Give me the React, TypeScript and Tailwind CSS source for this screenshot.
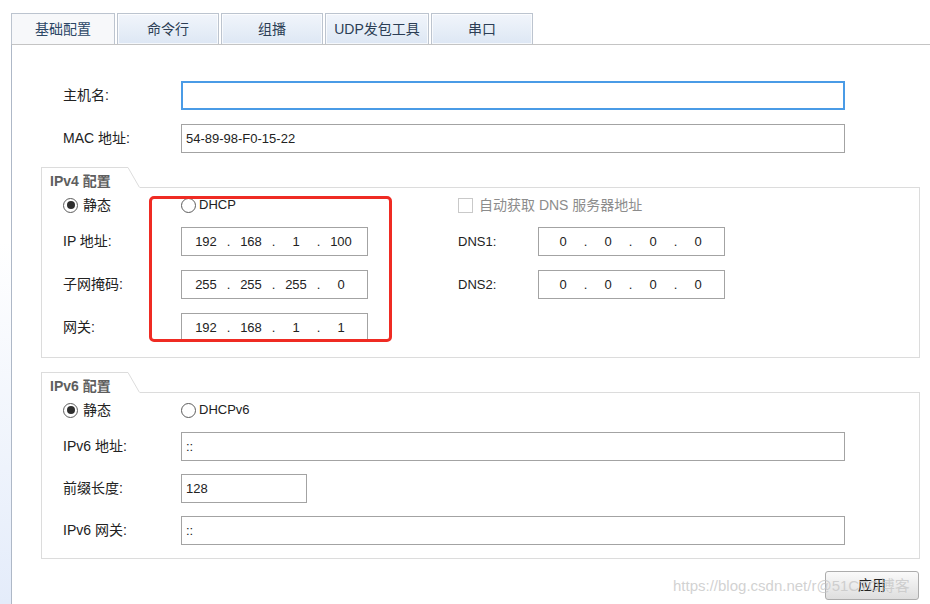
import type { ReactNode } from 'react'

const tabs = ['基础配置', '命令行', '组播', 'UDP发包工具', '串口']
const tabWidths = ['w-[104px]', 'w-[102px]', 'w-[102px]', 'w-[104px]', 'w-[102px]']

function Radio({ checked, label }: { checked?: boolean; label: string }) {
  return (
    <div className="flex h-[18px] items-center">
      <span className="flex h-[15px] w-[15px] items-center justify-center rounded-full border border-[#5c5c5c] bg-white">
        {checked ? <span className="h-[8px] w-[8px] rounded-full bg-[#2e2e2e]" /> : null}
      </span>
      <span className={checked ? 'ml-[5px] text-[14px] text-[#222]' : 'ml-[3px] text-[13px] text-[#222]'}>{label}</span>
    </div>
  )
}

function IpBox({ parts }: { parts: string[] }) {
  return (
    <div className="flex h-[29px] w-[187px] items-center border border-[#a3a3a3] bg-white pl-[9px] text-[13px] text-[#222]">
      {parts.map((part, index) => (
        <div className="flex" key={index}>
          <span className="w-[30px] text-center">{part}</span>
          {index < 3 ? <span className="w-[15px] text-center">.</span> : null}
        </div>
      ))}
    </div>
  )
}

function Field({ label, children }: { label: string; children: ReactNode }) {
  return (
    <div className="flex items-center">
      <div className="w-[118px] text-[14px] text-[#222]">{label}</div>
      {children}
    </div>
  )
}

function TextBox({ value, width = 'w-[664px]', focus }: { value?: string; width?: string; focus?: boolean }) {
  return (
    <div
      className={`flex h-[29px] items-center bg-white pl-[4px] text-[13px] text-[#222] ${width} ${
        focus ? 'border-2 border-[#4a9be6]' : 'border border-[#a3a3a3]'
      }`}
    >
      {value}
    </div>
  )
}

function GroupTitle({ title }: { title: string }) {
  return (
    <div className="flex h-[21px]">
      <div className="flex w-[87px] items-end border-l border-t border-[#dcdcdc] pl-[8px] text-[14px] leading-[14px] font-bold text-[#5e5e5e]">
        {title}
      </div>
      <svg className="h-[21px] w-[12px] shrink-0" viewBox="0 0 12 21">
        <line stroke="#dcdcdc" strokeWidth="1" x1="0" x2="11.5" y1="0.5" y2="20.5" />
      </svg>
      <div className="flex-1 border-b border-[#dcdcdc]" />
    </div>
  )
}

export default function App() {
  return (
    <div
      className="relative h-[604px] w-[930px] overflow-hidden bg-white"
      style={{ fontFamily: '"Liberation Sans", "Noto Sans CJK SC", sans-serif' }}
    >
      <div className="flex h-full">
        <div className="w-[11px] shrink-0 bg-gradient-to-b from-white from-40% to-[#e4ecfa]" />
        <div className="flex flex-1 flex-col">
          <div className="flex gap-[2px] pt-[13px]">
            {tabs.map((tab, index) => (
              <div
                className={`flex h-[31px] items-center justify-center border border-b-0 border-[#bcc4cf] text-[14px] ${tabWidths[index]} ${
                  index === 0
                    ? 'bg-[#f7f8fa] text-[#2c4766]'
                    : 'bg-gradient-to-b from-[#f1f5fb] to-[#dde7f4] text-[#2c3e55] shadow-[inset_0_0_0_1px_rgba(255,255,255,0.7)]'
                }`}
                key={tab}
              >
                {tab}
              </div>
            ))}
          </div>

          <div className="flex-1 border-l border-t border-l-[#aeb8c7] border-t-[#c4c4c4] pl-[29px] pr-[10px] pt-[36px]">
            <div className="flex flex-col gap-[14px] pl-[22px]">
              <Field label="主机名:">
                <TextBox focus />
              </Field>
              <Field label="MAC 地址:">
                <TextBox value="54-89-98-F0-15-22" />
              </Field>
            </div>

            <div className="mt-[14px]">
              <GroupTitle title="IPv4 配置" />
              <div className="flex border-x border-b border-[#dcdcdc] pb-[15px] pl-[21px] pt-[8px]">
                <div className="flex w-[395px] flex-col gap-[14px]">
                  <div className="-mb-[1px] flex">
                    <div className="w-[118px]">
                      <Radio checked label="静态" />
                    </div>
                    <Radio label="DHCP" />
                  </div>
                  <Field label="IP 地址:">
                    <IpBox parts={['192', '168', '1', '100']} />
                  </Field>
                  <Field label="子网掩码:">
                    <IpBox parts={['255', '255', '255', '0']} />
                  </Field>
                  <Field label="网关:">
                    <IpBox parts={['192', '168', '1', '1']} />
                  </Field>
                </div>
                <div className="flex flex-col gap-[14px]">
                  <div className="-mb-[1px] flex h-[18px] items-center">
                    <span className="h-[15px] w-[15px] border border-[#c9c9c9] bg-white" />
                    <span className="ml-[6px] text-[14px] text-[#8c8c8c]">自动获取 DNS 服务器地址</span>
                  </div>
                  <div className="flex items-center">
                    <div className="w-[80px] text-[13px] text-[#222]">DNS1:</div>
                    <IpBox parts={['0', '0', '0', '0']} />
                  </div>
                  <div className="flex items-center">
                    <div className="w-[80px] text-[13px] text-[#222]">DNS2:</div>
                    <IpBox parts={['0', '0', '0', '0']} />
                  </div>
                </div>
              </div>
            </div>

            <div className="mt-[14px]">
              <GroupTitle title="IPv6 配置" />
              <div className="flex flex-col gap-[13px] border-x border-b border-[#dcdcdc] pb-[13px] pl-[21px] pt-[8px]">
                <div className="flex">
                  <div className="w-[118px]">
                    <Radio checked label="静态" />
                  </div>
                  <Radio label="DHCPv6" />
                </div>
                <Field label="IPv6 地址:">
                  <TextBox value="::" />
                </Field>
                <Field label="前缀长度:">
                  <TextBox value="128" width="w-[126px]" />
                </Field>
                <Field label="IPv6 网关:">
                  <TextBox value="::" />
                </Field>
              </div>
            </div>

            <div className="mt-[12px] flex justify-end pr-[1px]">
              <div className="flex h-[29px] w-[94px] items-center justify-center rounded-[3px] border border-[#acacac] bg-gradient-to-b from-[#fafafa] to-[#dedede] text-[14px] text-[#222]">
                应用
              </div>
            </div>
          </div>
        </div>
      </div>

      <div className="absolute left-[149px] top-[196px] h-[146px] w-[243px] rounded-[5px] border-[3px] border-[#ef2b23]" />

      <div className="absolute left-[673px] top-[575px] text-[15px] text-[#c6c6c6]/80">https://blog.csdn.net/r@51CTO博客</div>
    </div>
  )
}
